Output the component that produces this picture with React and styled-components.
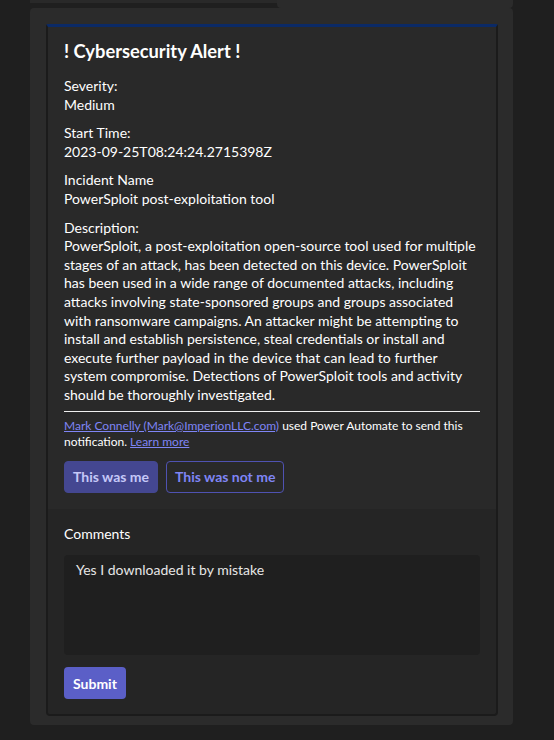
import React from "react";
import styled, { createGlobalStyle } from "styled-components";

const Global = createGlobalStyle`
  html, body { margin: 0; padding: 0; background: #1f1f1f; }
  body { font-family: "Segoe UI", Lato, sans-serif; color: #ffffff; }
  * { box-sizing: border-box; }
`;

const Page = styled.div`
  width: 554px;
  height: 740px;
  background: #1f1f1f;
  padding-left: 30px;
  overflow: hidden;
`;

const TopRow = styled.div`
  display: flex;
  width: 483px;
  height: 8px;
`;

const TopStrip = styled.div`
  width: 247px;
  height: 3px;
  background: #292929;
`;

const TopPopup = styled.div`
  flex: 1;
  height: 8px;
  background: #2b2b2b;
  border-radius: 0 0 4px 4px;
`;

const Panel = styled.div`
  width: 483px;
  background: #2b2b2b;
  border-radius: 4px;
  padding: 16px 15px 9px 16px;
`;

const Card = styled.div`
  background: #292929;
  border: 2px solid #1b1b1b;
  border-top: 3px solid #0b2a66;
  border-radius: 2px 2px 4px 4px;
  overflow: hidden;
`;

const Main = styled.div`
  padding: 12px 16px 16px 16px;
`;

const Title = styled.div`
  font-size: 18.3px;
  font-weight: 700;
  line-height: 24px;
  margin-bottom: 14px;
`;

const Field = styled.div`
  font-size: 14px;
  line-height: 18.6px;
  color: #ffffff;
  margin-bottom: ${(p) => (p.$last ? "6px" : "10px")};
`;

const Rule = styled.hr`
  border: 0;
  border-top: 1px solid #f0f0f0;
  margin: 0 0 6px 0;
`;

const Footer = styled.div`
  font-size: 12px;
  line-height: 16px;
  color: #ffffff;
`;

const Link = styled.a`
  color: #7f85f5;
  text-decoration: underline;
`;

const Actions = styled.div`
  display: flex;
  gap: 8px;
  margin-top: 11px;
`;

const ActionButton = styled.button`
  height: 32px;
  padding: 0 8px;
  border-radius: 4px;
  font-family: inherit;
  font-size: 14px;
  font-weight: 700;
  border: 1px solid ${(p) => (p.$primary ? "#444791" : "#4f52b2")};
  background: ${(p) => (p.$primary ? "#444791" : "transparent")};
  color: ${(p) => (p.$primary ? "#c5c8f8" : "#7f85f5")};
`;

const CommentSection = styled.div`
  background: #252525;
  padding: 16px 16px 15px 16px;
`;

const Label = styled.div`
  font-size: 14px;
  line-height: 18.6px;
  margin-bottom: 12px;
`;

const CommentBox = styled.div`
  height: 100px;
  background: #1f1f1f;
  border-radius: 4px;
  padding: 6px 12px;
  font-size: 14px;
  line-height: 18.6px;
  color: #e6e6e6;
`;

const Submit = styled.button`
  margin-top: 12px;
  height: 32px;
  padding: 0 9px;
  border: 0;
  border-radius: 4px;
  background: #5b5fc7;
  color: #ffffff;
  font-family: inherit;
  font-size: 14px;
  font-weight: 700;
`;

export default function App() {
  return (
    <Page>
      <Global />
      <TopRow>
        <TopStrip />
        <TopPopup />
      </TopRow>
      <Panel>
        <Card>
          <Main>
            <Title>! Cybersecurity Alert !</Title>
            <Field>Severity:<br />Medium</Field>
            <Field>Start Time:<br />2023-09-25T08:24:24.2715398Z</Field>
            <Field>Incident Name<br />PowerSploit post-exploitation tool</Field>
            <Field $last>
              Description:<br />
              PowerSploit, a post-exploitation open-source tool used for multiple stages of an attack, has been detected on this device. PowerSploit has been used in a wide range of documented attacks, including attacks involving state-sponsored groups and groups associated with ransomware campaigns. An attacker might be attempting to install and establish persistence, steal credentials or install and execute further payload in the device that can lead to further system compromise. Detections of PowerSploit tools and activity should be thoroughly investigated.
            </Field>
            <Rule />
            <Footer>
              <Link href="#">Mark Connelly (Mark@ImperionLLC.com)</Link> used Power Automate to send this notification. <Link href="#">Learn more</Link>
            </Footer>
            <Actions>
              <ActionButton $primary>This was me</ActionButton>
              <ActionButton>This was not me</ActionButton>
            </Actions>
          </Main>
          <CommentSection>
            <Label>Comments</Label>
            <CommentBox>Yes I downloaded it by mistake</CommentBox>
            <Submit>Submit</Submit>
          </CommentSection>
        </Card>
      </Panel>
    </Page>
  );
}
